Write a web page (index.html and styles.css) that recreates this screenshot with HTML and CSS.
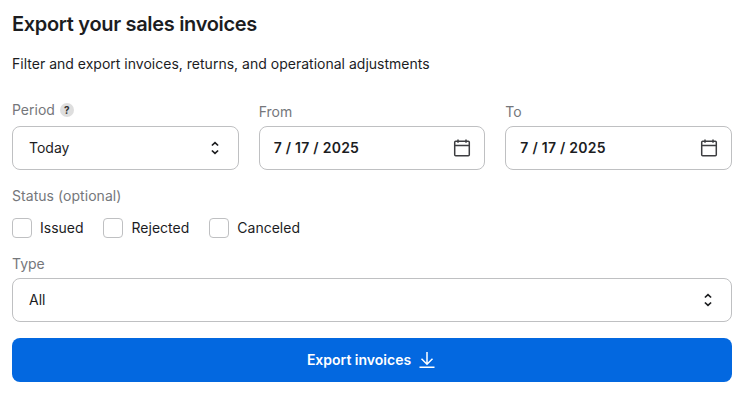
FILE: index.html
```html
<!DOCTYPE html>
<html lang="en">
<head>
<meta charset="utf-8">
<title>Export your sales invoices</title>
<link rel="stylesheet" href="styles.css">
</head>
<body>
<main class="page">
  <h1 class="title">Export your sales invoices</h1>
  <p class="subtitle">Filter and export invoices, returns, and operational adjustments</p>
  <div class="filters">
    <div class="field">
      <div class="label label-period">Period <span class="help">?</span></div>
      <div class="control"><span class="value">Today</span>
        <svg class="chevrons" width="10" height="16" viewBox="0 0 10 16"><path d="M1.9 5.5 5 2.6l3.1 2.9M1.9 10.5 5 13.4l3.1-2.9"/></svg></div>
    </div>
    <div class="field">
      <div class="label">From</div>
      <div class="control date"><span class="value">7 / 17 / 2025</span>
        <svg class="calendar" width="18" height="18" viewBox="0 0 18 18"><rect x="1.7" y="2.2" width="14.6" height="14.6" rx="1"/><path d="M2 6.5h14M5 .5v3.3M13 .5v3.3"/></svg></div>
    </div>
    <div class="field">
      <div class="label">To</div>
      <div class="control date"><span class="value">7 / 17 / 2025</span>
        <svg class="calendar" width="18" height="18" viewBox="0 0 18 18"><rect x="1.7" y="2.2" width="14.6" height="14.6" rx="1"/><path d="M2 6.5h14M5 .5v3.3M13 .5v3.3"/></svg></div>
    </div>
  </div>
  <div class="label label-status">Status (optional)</div>
  <div class="checks">
    <label class="check"><span class="box"></span>Issued</label>
    <label class="check"><span class="box"></span>Rejected</label>
    <label class="check"><span class="box"></span>Canceled</label>
  </div>
  <div class="label label-type">Type</div>
  <div class="control"><span class="value">All</span>
    <svg class="chevrons" width="10" height="16" viewBox="0 0 10 16"><path d="M1.9 5.5 5 2.6l3.1 2.9M1.9 10.5 5 13.4l3.1-2.9"/></svg></div>
  <button class="export">Export invoices
    <svg class="download" width="16" height="18" viewBox="0 0 16 18"><path d="M8 1v12M2.5 7.8 8 13.3l5.5-5.5M.5 16.2h15"/></svg></button>
</main>
</body>
</html>
```
FILE: styles.css
```css
* { box-sizing: border-box; }
body { margin: 0; background: #fff; color: #1c1d1f; font: 14px/20px Inter, "Liberation Sans", sans-serif; }
.page { padding: 10px 12px 0; }
.title { margin: 0; font-size: 20px; line-height: 28px; font-weight: 600; letter-spacing: -0.32px; }
.subtitle { margin: 16px 0 0; letter-spacing: 0.01px; }
.filters { display: grid; grid-template-columns: repeat(3, 1fr); gap: 20px; margin-top: 26px; }
.field { display: flex; flex-direction: column; }
.label { height: 20px; margin: 2px 0 4px; color: #75777b; }
.label-period { display: flex; align-items: center; gap: 5px; margin: 0 0 6px; }
.help { width: 14px; height: 14px; border-radius: 50%; background: #dedede; color: #333; font-size: 10px; line-height: 14px; font-weight: 700; text-align: center; }
.control { display: flex; align-items: center; justify-content: space-between; height: 44px; padding: 0 18px 0 16px; border: 1px solid #bfc0c2; border-radius: 8px; }
.date { padding: 0 13px 0 14px; font-weight: 600; letter-spacing: 0.25px; }
svg { flex: none; fill: none; stroke: #1c1d1f; stroke-width: 1.5; }
.chevrons { stroke-width: 1.7; }
.calendar { stroke: #3c3d40; }
.label-status { margin: 16px 0 12px; letter-spacing: 0.05px; }
.checks { display: flex; gap: 19px; height: 20px; }
.check { display: flex; align-items: center; gap: 8px; }
.check + .check { gap: 9px; }
.check:last-child { gap: 8.4px; margin-left: 0.7px; }
.box { width: 20px; height: 20px; border: 1px solid #bfc0c2; border-radius: 4px; }
.label-type { margin: 16px 0 4px; }
.export { display: flex; align-items: center; justify-content: center; gap: 8px; width: 100%; height: 44px; margin-top: 16px; padding: 0 2px 0 0; border: 0; border-radius: 8px; background: #0368e0; color: #fff; font: inherit; font-weight: 600; }
.download { stroke: #fff; }
```
